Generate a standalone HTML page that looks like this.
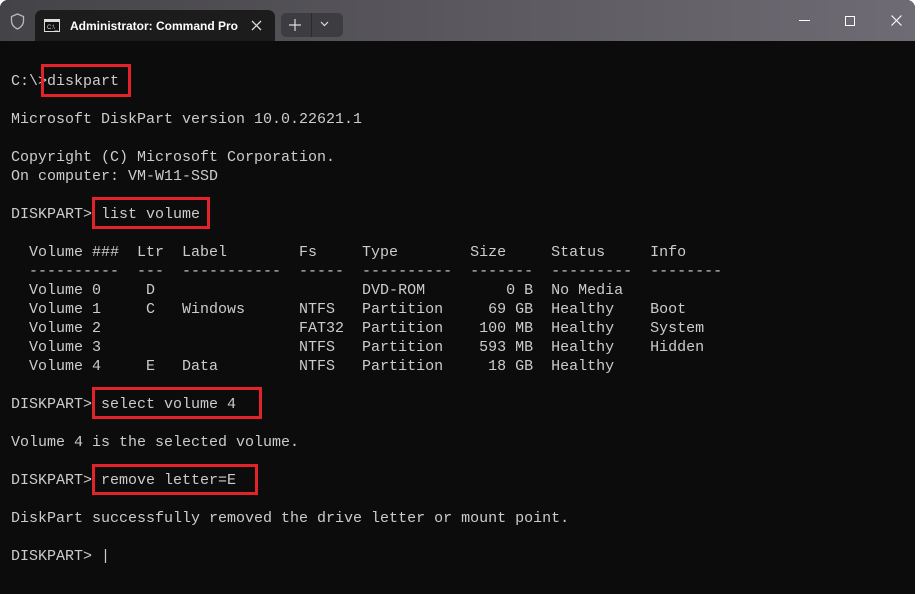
<!DOCTYPE html>
<html><head><style>
body{margin:0;background:#fff;width:920px;height:594px;overflow:hidden;position:relative}
.win{position:absolute;left:0;top:0;width:915px;height:594px;border-radius:8px 8px 0 0;overflow:hidden;background:#0c0c0c}
.tb{position:absolute;left:0;top:0;width:915px;height:41px;background:linear-gradient(90deg,#444347,#5a585e 50%,#6f6b74)}
.tab{position:absolute;left:35px;top:10px;width:240px;height:31px;background:#1c1c1c;border-radius:7px 7px 0 0}
.tab .t{position:absolute;left:35px;top:9px;font:600 12px "Liberation Sans",sans-serif;color:#fff}
.term{position:absolute;left:11px;top:72px;font:15px/19px "Liberation Mono",monospace;color:#cccccc;white-space:pre}
.box{position:absolute;border:3px solid #e3232a;box-sizing:border-box}
</style></head><body>
<div class="win">
<div class="tb">
<svg style="position:absolute;left:10px;top:13px" width="15" height="17" viewBox="0 0 15 17"><path d="M7.5 1 L13.5 3.5 V8 C13.5 12 10.5 14.5 7.5 16 C4.5 14.5 1.5 12 1.5 8 V3.5Z" fill="none" stroke="#bbb" stroke-width="1.3"/></svg>
<div class="tab">
<svg style="position:absolute;left:9px;top:9px" width="16" height="13"><rect x=".5" y=".5" width="15" height="12" fill="#111" stroke="#ddd"/><rect x="1" y="1" width="14" height="2" fill="#ddd"/><text x="3" y="10" font-size="6" fill="#ddd" font-family="Liberation Sans">C:\_</text></svg>
<div class="t">Administrator: Command Pro</div>
<svg style="position:absolute;left:216px;top:10px" width="11" height="11"><path d="M1 1L10 10M10 1L1 10" stroke="#ddd" stroke-width="1.3"/></svg>
</div>
<div style="position:absolute;left:281px;top:13px;width:62px;height:24px;background:#3d3c40;border-radius:5px"></div>
<div style="position:absolute;left:311px;top:13px;width:1px;height:24px;background:#2c2c2c"></div>
<svg style="position:absolute;left:289px;top:19px" width="12" height="12"><path d="M6 0V12M0 6H12" stroke="#ddd" stroke-width="1.2"/></svg>
<svg style="position:absolute;left:320px;top:21px" width="9" height="6"><path d="M1 1L4.5 4.5L8 1" fill="none" stroke="#ddd" stroke-width="1.2"/></svg>
<div style="position:absolute;left:799px;top:20px;width:11px;height:1px;background:#fff"></div>
<div style="position:absolute;left:845px;top:16px;width:8px;height:8px;border:1px solid #fff"></div>
<svg style="position:absolute;left:891px;top:15px" width="11" height="11"><path d="M.5 .5L10.5 10.5M10.5 .5L.5 10.5" stroke="#fff" stroke-width="1.1"/></svg>
</div>
<div class="term">C:\>diskpart

Microsoft DiskPart version 10.0.22621.1

Copyright (C) Microsoft Corporation.
On computer: VM-W11-SSD

DISKPART> list volume

  Volume ###  Ltr  Label        Fs     Type        Size     Status     Info
  ----------  ---  -----------  -----  ----------  -------  ---------  --------
  Volume 0     D                       DVD-ROM         0 B  No Media
  Volume 1     C   Windows      NTFS   Partition     69 GB  Healthy    Boot
  Volume 2                      FAT32  Partition    100 MB  Healthy    System
  Volume 3                      NTFS   Partition    593 MB  Healthy    Hidden
  Volume 4     E   Data         NTFS   Partition     18 GB  Healthy

DISKPART> select volume 4

Volume 4 is the selected volume.

DISKPART> remove letter=E

DiskPart successfully removed the drive letter or mount point.

DISKPART> |</div>
<div class="box" style="left:41px;top:64px;width:90px;height:33px"></div>
<div class="box" style="left:92px;top:197px;width:118px;height:32px"></div>
<div class="box" style="left:92px;top:387px;width:170px;height:32px"></div>
<div class="box" style="left:92px;top:464px;width:166px;height:31px"></div>
</div>
</body></html>
